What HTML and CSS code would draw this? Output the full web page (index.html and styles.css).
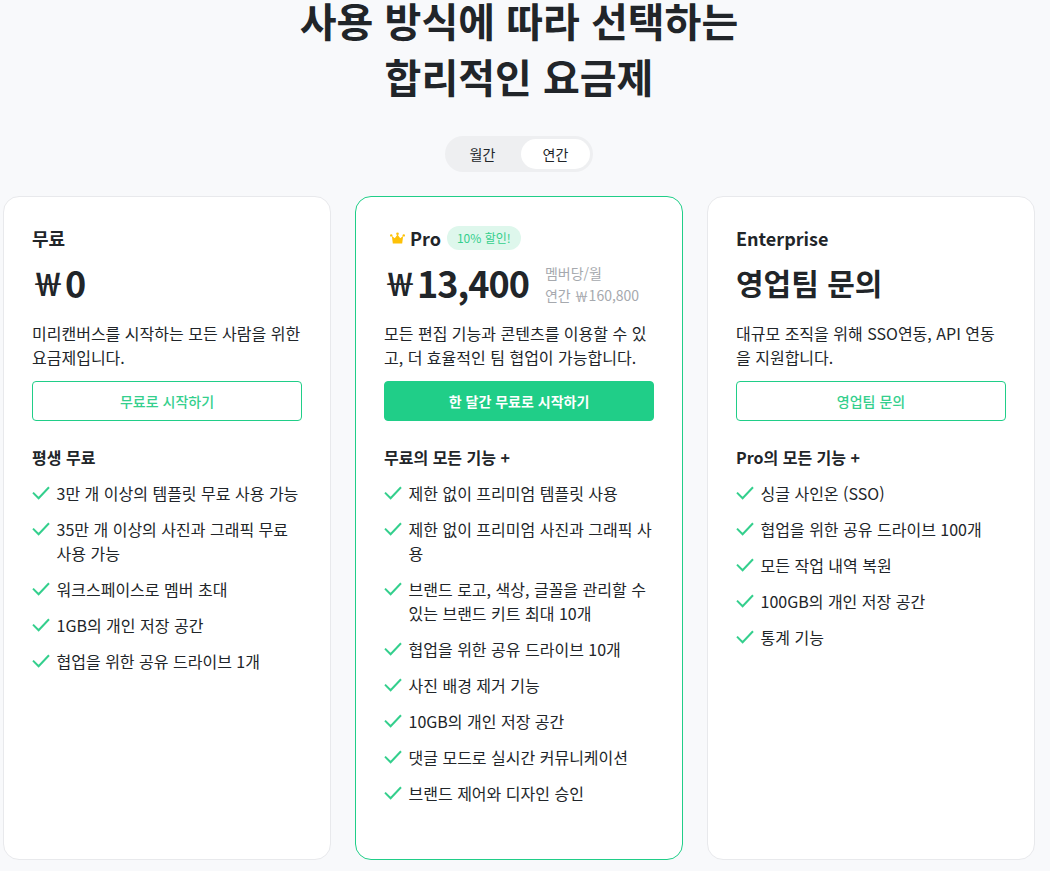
FILE: index.html
```html
<!DOCTYPE html>
<html lang="ko">
<head>
<meta charset="utf-8">
<title>요금제</title>
<link rel="stylesheet" href="styles.css">
</head>
<body>
<svg class="defs" width="0" height="0" aria-hidden="true"><symbol id="chk" viewBox="0 0 18 14"><path d="M1 6.6 6.6 12.2 17 1.2" fill="none" stroke="#34cf8d" stroke-width="2"/></symbol></svg>
<main class="page">
  <h1 class="title">사용 방식에 따라 선택하는<br>합리적인 요금제</h1>
  <div class="toggle-wrap">
    <div class="toggle"><span class="opt first">월간</span><span class="opt on">연간</span></div>
  </div>
  <section class="cards">
    <article class="card">
      <div class="name"><span>무료</span></div>
      <div class="price"><span class="won">￦</span><span class="num">0</span></div>
      <p class="desc">미리캔버스를 시작하는 모든 사람을 위한 요금제입니다.</p>
      <a class="btn">무료로 시작하기</a>
      <h3 class="sub">평생 무료</h3>
      <ul class="list">
        <li><svg class="ck"><use href="#chk"/></svg><span>3만 개 이상의 템플릿 무료 사용 가능</span></li>
        <li><svg class="ck"><use href="#chk"/></svg><span>35만 개 이상의 사진과 그래픽 무료 사용 가능</span></li>
        <li><svg class="ck"><use href="#chk"/></svg><span>워크스페이스로 멤버 초대</span></li>
        <li><svg class="ck"><use href="#chk"/></svg><span>1GB의 개인 저장 공간</span></li>
        <li><svg class="ck"><use href="#chk"/></svg><span>협업을 위한 공유 드라이브 1개</span></li>
      </ul>
    </article>
    <article class="card pro">
      <div class="name">
        <svg class="crown" viewBox="0 0 16 12"><path d="M8 2.2 10.9 6.2 14 3.8 13 11.8H3L2 3.8 5.1 6.2Z" fill="#fdc107"/><circle cx="8" cy="1.4" r="1.4" fill="#fdc107"/><circle cx="1.3" cy="3.2" r="1.3" fill="#fdc107"/><circle cx="14.7" cy="3.2" r="1.3" fill="#fdc107"/></svg>
        <span>Pro</span><span class="badge">10% 할인!</span>
      </div>
      <div class="price">
        <span class="won">￦</span><span class="num">13,400</span>
        <div class="per"><span>멤버당/월</span><span>연간 ￦160,800</span></div>
      </div>
      <p class="desc">모든 편집 기능과 콘텐츠를 이용할 수 있고, 더 효율적인 팀 협업이 가능합니다.</p>
      <a class="btn solid">한 달간 무료로 시작하기</a>
      <h3 class="sub">무료의 모든 기능 +</h3>
      <ul class="list">
        <li><svg class="ck"><use href="#chk"/></svg><span>제한 없이 프리미엄 템플릿 사용</span></li>
        <li><svg class="ck"><use href="#chk"/></svg><span>제한 없이 프리미엄 사진과 그래픽 사용</span></li>
        <li><svg class="ck"><use href="#chk"/></svg><span>브랜드 로고, 색상, 글꼴을 관리할 수 있는 브랜드 키트 최대 10개</span></li>
        <li><svg class="ck"><use href="#chk"/></svg><span>협업을 위한 공유 드라이브 10개</span></li>
        <li><svg class="ck"><use href="#chk"/></svg><span>사진 배경 제거 기능</span></li>
        <li><svg class="ck"><use href="#chk"/></svg><span>10GB의 개인 저장 공간</span></li>
        <li><svg class="ck"><use href="#chk"/></svg><span>댓글 모드로 실시간 커뮤니케이션</span></li>
        <li><svg class="ck"><use href="#chk"/></svg><span>브랜드 제어와 디자인 승인</span></li>
      </ul>
    </article>
    <article class="card">
      <div class="name"><span>Enterprise</span></div>
      <div class="price"><span class="num text">영업팀 문의</span></div>
      <p class="desc">대규모 조직을 위해 SSO연동, API 연동을 지원합니다.</p>
      <a class="btn">영업팀 문의</a>
      <h3 class="sub">Pro의 모든 기능 +</h3>
      <ul class="list">
        <li><svg class="ck"><use href="#chk"/></svg><span>싱글 사인온 (SSO)</span></li>
        <li><svg class="ck"><use href="#chk"/></svg><span>협업을 위한 공유 드라이브 100개</span></li>
        <li><svg class="ck"><use href="#chk"/></svg><span>모든 작업 내역 복원</span></li>
        <li><svg class="ck"><use href="#chk"/></svg><span>100GB의 개인 저장 공간</span></li>
        <li><svg class="ck"><use href="#chk"/></svg><span>통계 기능</span></li>
      </ul>
    </article>
  </section>
</main>
</body>
</html>
```
FILE: styles.css
```css
* { box-sizing: border-box; }
html, body { margin: 0; padding: 0; }
body {
  background: #f8f9fb;
  color: #212529;
  font-family: "Noto Sans CJK KR", "Noto Sans", sans-serif;
  overflow: hidden;
  height: 871px;
}
.defs { display: block; height: 0; }
.page { width: 1035px; padding-left: 3px; }
.title {
  margin: -8px 0 0;
  font-size: 40px;
  line-height: 56px;
  font-weight: 700;
  text-align: center;
}
.toggle-wrap { display: flex; justify-content: center; margin-top: 32px; }
.toggle {
  display: flex;
  width: 148px;
  height: 36px;
  padding: 3px;
  border-radius: 18px;
  background: #eeeff1;
}
.opt {
  width: 69px;
  display: flex;
  align-items: center;
  justify-content: center;
  border-radius: 15px;
  font-size: 14px;
}
.opt.first { width: 73px; padding-right: 4px; }
.opt.on { background: #fff; }
.cards {
  display: grid;
  grid-template-columns: repeat(3, 328px);
  gap: 24px;
  margin-top: 24px;
}
.card {
  height: 664px;
  padding: 26px 28px 28px;
  background: #fff;
  border: 1px solid #e8e9ec;
  border-radius: 16px;
}
.card.pro { border-color: #20ce88; }
.name {
  display: flex;
  align-items: center;
  height: 30px;
  font-size: 18px;
  font-weight: 700;
  line-height: 30px;
}
.crown { width: 15px; height: 12px; margin: 0 5px 0 6px; }
.badge {
  margin-left: 6px;
  height: 24px;
  padding: 0 10px;
  border-radius: 12px;
  background: #def7ec;
  color: #34cf8d;
  font-size: 12px;
  font-weight: 400;
  line-height: 24px;
}
.price {
  display: flex;
  align-items: center;
  height: 52px;
  margin-top: 3px;
}
.won { font-size: 30px; font-weight: 700; margin-left: 1px; margin-right: 2px; }
.num { font-size: 36px; font-weight: 700; line-height: 52px; letter-spacing: -1px; }
.num.text { font-size: 30px; letter-spacing: 0; }
.per {
  display: flex;
  flex-direction: column;
  margin-left: 16px;
  padding-top: 4px;
  color: #a6a9ae;
  font-size: 14px;
  line-height: 22px;
}
.desc {
  margin: 13px 0 0;
  font-size: 16px;
  line-height: 24px;
  height: 48px;
  word-break: break-all;
}
.btn {
  display: flex;
  align-items: center;
  justify-content: center;
  height: 40px;
  margin-top: 12px;
  border: 1px solid #20ce88;
  border-radius: 4px;
  background: #fff;
  color: #34cf8d;
  font-size: 14px;
  font-weight: 500;
}
.btn.solid { background: #20ce88; color: #fff; font-weight: 700; }
.sub {
  margin: 24px 0 0;
  font-size: 16px;
  line-height: 24px;
  font-weight: 700;
}
.list { list-style: none; margin: 12px 0 0; padding: 0; }
.list li {
  display: flex;
  align-items: flex-start;
  gap: 6.5px;
  margin-bottom: 12px;
  font-size: 16px;
  line-height: 24px;
  word-break: break-all;
}
.ck { flex: none; width: 18px; height: 14px; margin-top: 5px; }
```
